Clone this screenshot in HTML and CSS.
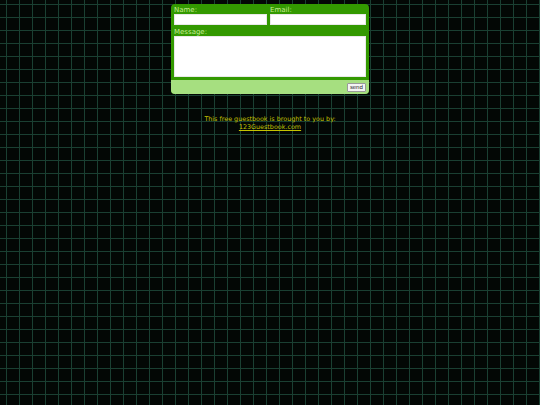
FILE: index.html
```html
<!DOCTYPE html>
<html>
<head>
<meta charset="utf-8">
<title>Guestbook</title>
<link rel="stylesheet" href="styles.css">
</head>
<body>
<form class="gb">
  <div class="gb-main">
    <div class="row">
      <div class="field field-name">
        <label class="lbl">Name:</label>
        <input class="inp" type="text">
      </div>
      <div class="field field-email">
        <label class="lbl">Email:</label>
        <input class="inp" type="text">
      </div>
    </div>
    <label class="lbl">Message:</label>
    <textarea class="msg"></textarea>
  </div>
  <div class="gb-foot">
    <button class="send" type="button">send</button>
  </div>
</form>
<div class="credit">
  <div>This free guestbook is brought to you by:</div>
  <a class="credit-link" href="#">123Guestbook.com</a>
</div>
</body>
</html>
```
FILE: styles.css
```css
html, body {
  margin: 0;
  padding: 0;
}
body {
  width: 540px;
  height: 405px;
  overflow: hidden;
  background-color: #030705;
  background-image:
    linear-gradient(to right, #1a3f32 1px, transparent 1px),
    linear-gradient(to bottom, #1a3f32 1px, transparent 1px);
  background-size: 13px 13px;
  background-position: 6px 4px;
  font-family: "DejaVu Sans", Verdana, sans-serif;
}
.gb {
  width: 198px;
  margin: 4px auto 0;
  background: #339900;
  border-radius: 4px;
  overflow: hidden;
  display: flex;
  flex-direction: column;
}
.gb-main {
  padding: 2px 3px 3px;
  display: flex;
  flex-direction: column;
}
.row {
  display: flex;
  gap: 3px;
}
.field-name {
  width: 93px;
}
.field-email {
  flex: 1;
}
.field {
  display: flex;
  flex-direction: column;
}
.lbl {
  font-size: 7px;
  line-height: 8px;
  color: #c6ec94;
}
.inp {
  box-sizing: border-box;
  height: 11px;
  margin: 0;
  padding: 0;
  border: 1px solid #e9e9e9;
  background: #fff;
  width: 100%;
}
.row + .lbl {
  margin-top: 3px;
}
.msg {
  box-sizing: border-box;
  height: 41px;
  margin: 0;
  padding: 0;
  border: 1px solid #e9e9e9;
  background: #fff;
  resize: none;
  width: 100%;
  display: block;
}
.gb-foot {
  background: #a6df80;
  height: 14px;
  display: flex;
  justify-content: flex-end;
  align-items: center;
  padding-right: 3px;
}
.send {
  box-sizing: border-box;
  width: 19px;
  height: 9px;
  margin: 0;
  padding: 0;
  font-family: "DejaVu Sans", sans-serif;
  font-size: 5.5px;
  line-height: 7px;
  color: #222;
  background: #f4f4f4;
  border: 1px solid #9a9a9a;
  border-radius: 1px;
}
.credit {
  margin-top: 21px;
  text-align: center;
  font-size: 6.4px;
  line-height: 8px;
  color: #c4c400;
}
.credit-link {
  color: #c4c400;
  text-decoration: underline;
}
```
